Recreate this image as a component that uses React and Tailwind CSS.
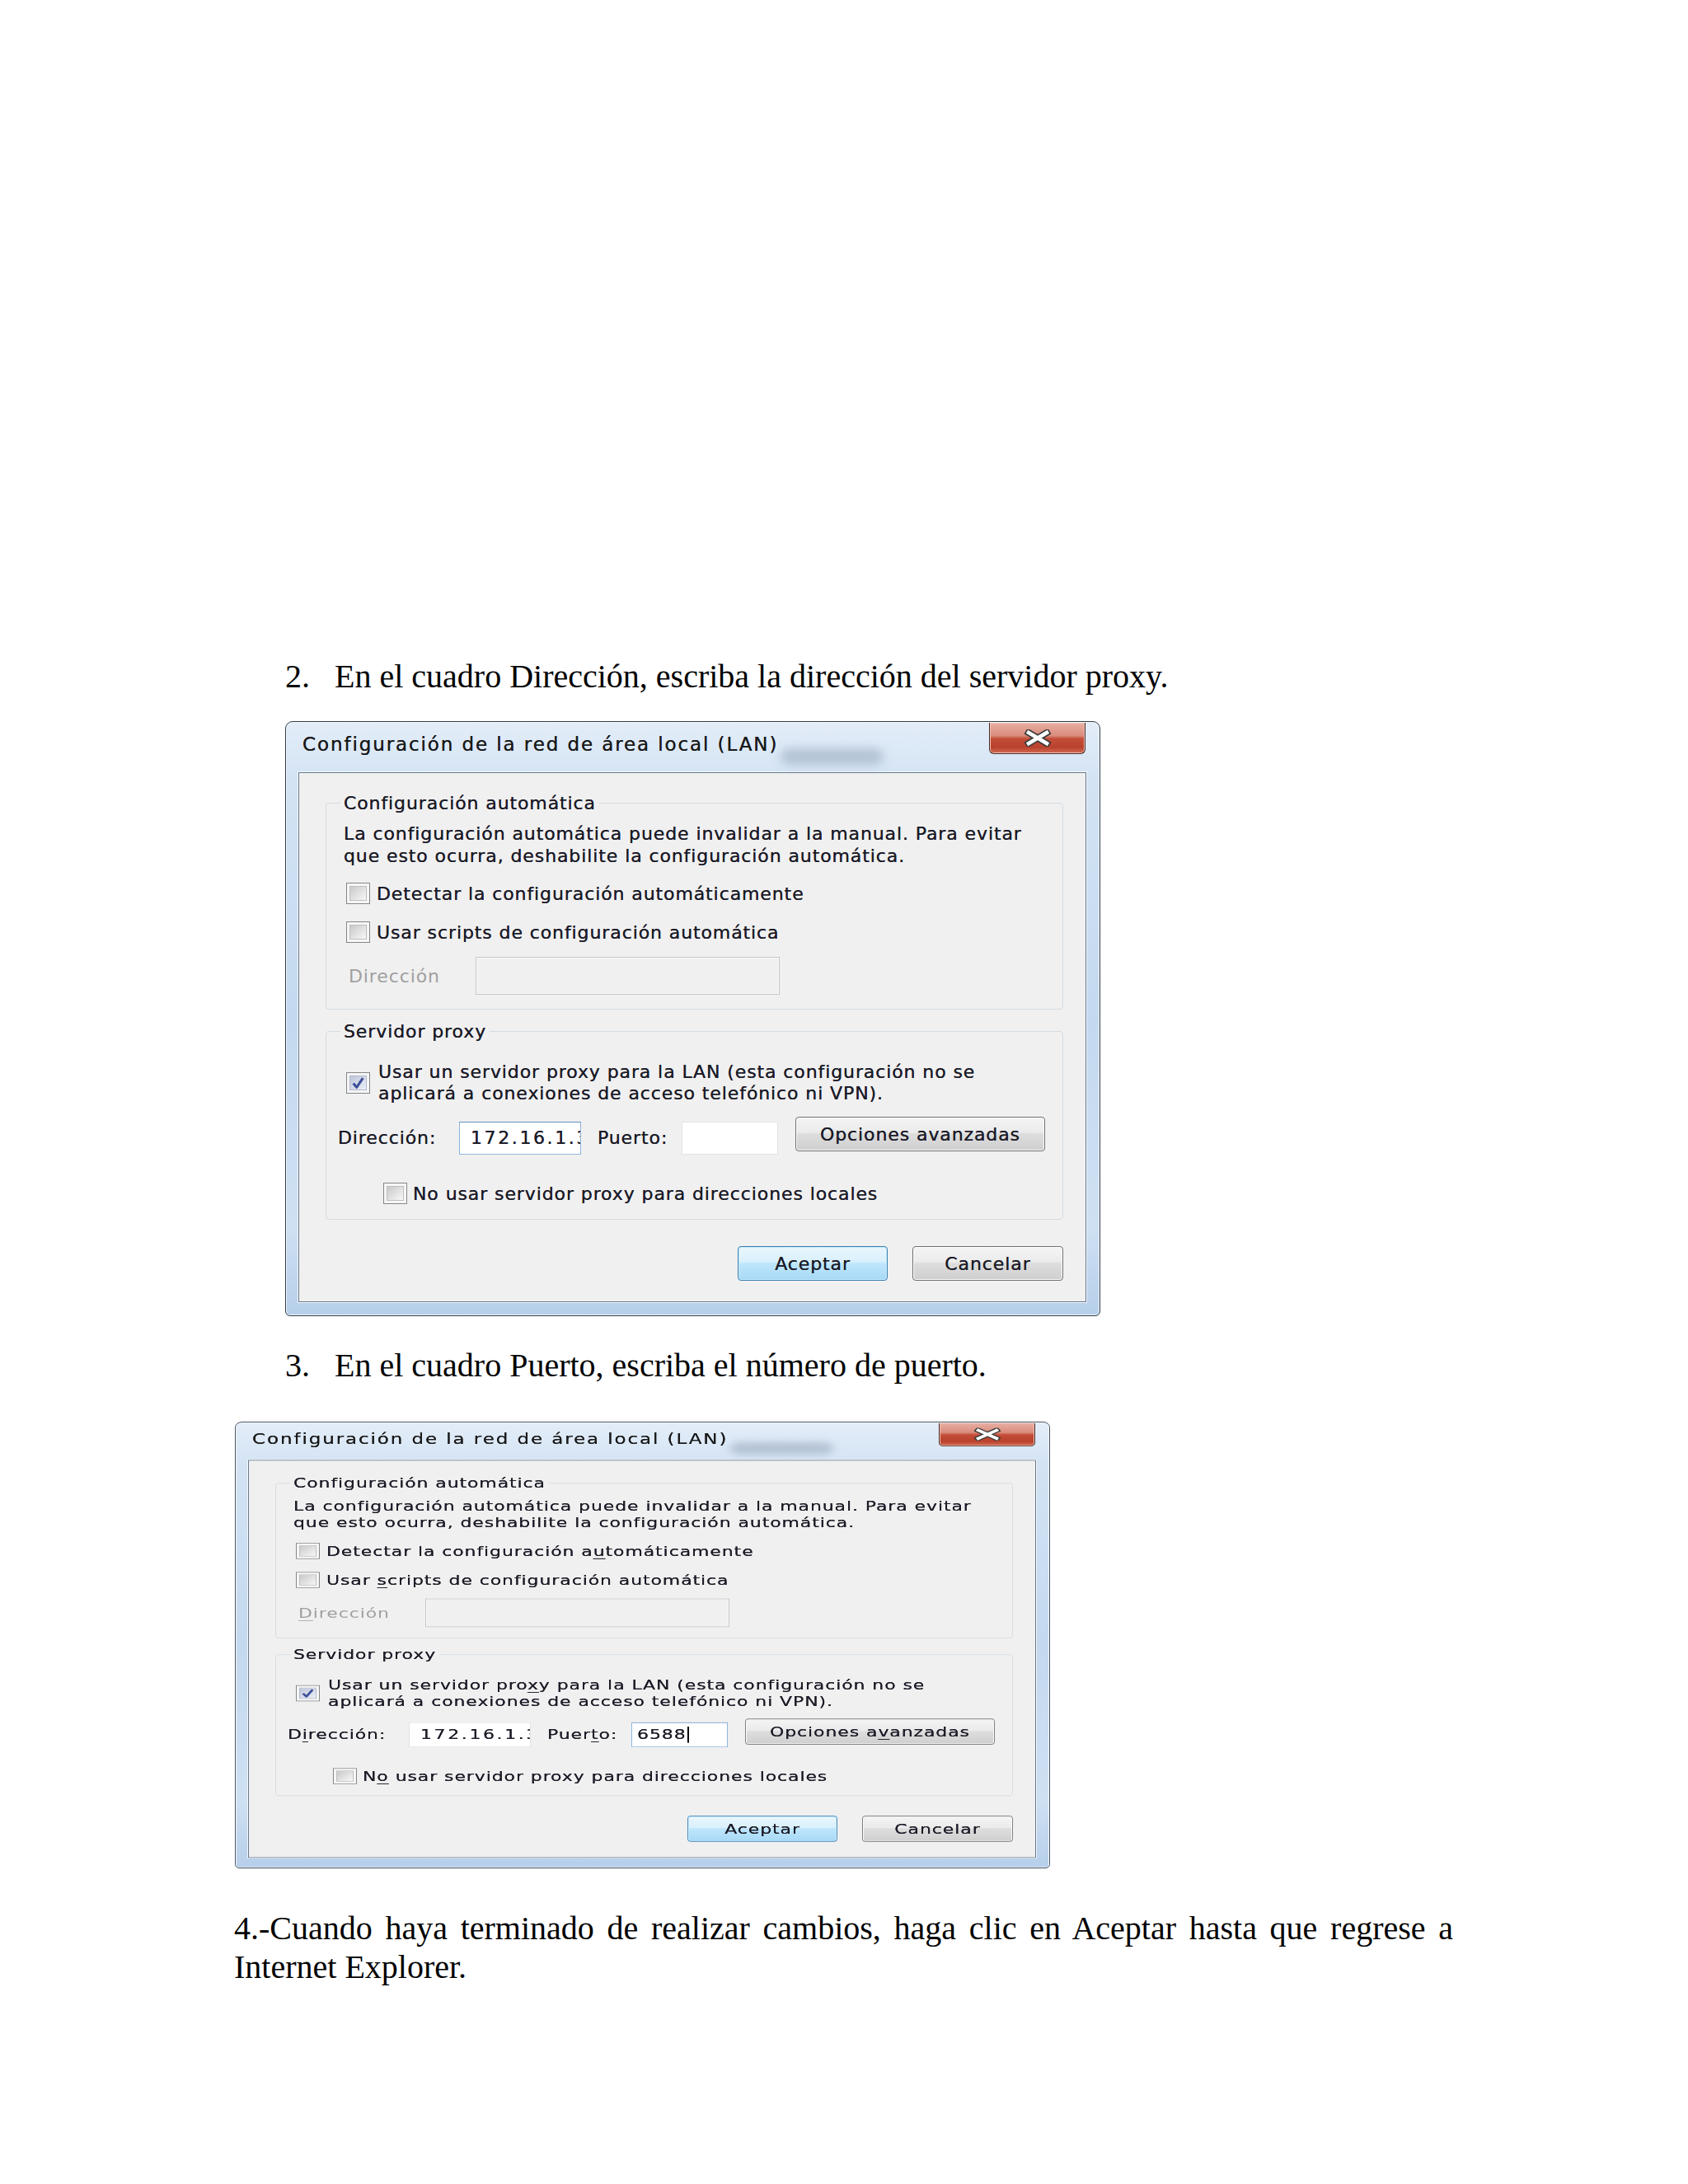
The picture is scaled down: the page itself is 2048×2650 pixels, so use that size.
import React from 'react'

const serif = "font-['Liberation_Serif','Times_New_Roman',serif]"
const ui = "font-['DejaVu_Sans','Noto_Sans',sans-serif]"

// access-key underline, only drawn in the second screenshot
function K({ on, children }) {
  if (!on) return children
  return <span className="underline decoration-1 underline-offset-[4px]">{children}</span>
}

function CheckBox({ checked = false }) {
  return (
    <div className="w-[29px] h-[26px] shrink-0 border border-[#858787] bg-[#f6f6f6] p-[3px]">
      <div
        className={
          checked
            ? 'relative h-full w-full border border-[#b3b9cc] bg-gradient-to-br from-[#bfc6db] to-[#eceff6]'
            : 'h-full w-full border border-[#bfbfbf] bg-gradient-to-br from-[#c9c9c9] to-[#f8f8f8]'
        }
      >
        {checked && (
          <svg viewBox="0 0 21 18" className="absolute inset-0 h-full w-full">
            <path d="M4 9.5 L8.5 15 L17 2.5" fill="none" stroke="#3d4f9a" strokeWidth="3.4" strokeLinejoin="round" />
          </svg>
        )}
      </div>
    </div>
  )
}

function Button({ children, primary = false, className = '' }) {
  return (
    <div
      className={
        'flex items-center justify-center rounded-[4px] border ' +
        (primary
          ? 'border-[#3c7fb1] bg-[linear-gradient(to_bottom,#eaf6fd_0%,#d9f0fc_45%,#bee6fd_50%,#a7d9f5_100%)] shadow-[inset_0_0_0_1px_#c6ecff] '
          : 'border-[#707070] bg-[linear-gradient(to_bottom,#f4f4f4_0%,#ebebeb_45%,#dddddd_50%,#cfcfcf_100%)] shadow-[inset_0_0_0_1px_#fcfcfc] ') +
        className
      }
    >
      {children}
    </div>
  )
}

function Dialog({ alt = false }) {
  return (
    <div className={`relative flex h-[722px] w-[989px] flex-col overflow-hidden rounded-t-[9px] rounded-b-[6px] border border-[#2f3b48] bg-[linear-gradient(to_bottom,#e3edf8_0%,#d3e3f4_10%,#c4d9ef_50%,#cfe0f2_85%,#b6cfea_100%)] shadow-[inset_0_0_0_1px_#f4f8fd] ${ui}`}>
      {/* glass smudge behind the title */}
      <div className="absolute left-[600px] top-[32px] h-[20px] w-[125px] rounded-full bg-[#7d8ea3] opacity-40 blur-[6px]" />

      {/* title bar */}
      <div className="relative flex h-[61px] shrink-0 items-start">
        <span className="ml-[20px] mt-[13px] text-[23px] leading-[28px] tracking-[1.9px] text-[#1a1a1a] [text-shadow:0_0_0.5px_#1a1a1a]">
          Configuración de la red de área local (LAN)
        </span>
        <div className="ml-auto mr-[17px] mt-[1px] flex h-[38px] w-[117px] items-center justify-center rounded-b-[6px] border border-t-0 border-[#4a2a26] bg-[linear-gradient(to_bottom,#e8b0a3_0%,#d98c7c_42%,#c44e39_52%,#b9412d_80%,#d36c52_100%)] shadow-[inset_0_0_0_1px_#f0c2b6]">
          <svg width="34" height="21" viewBox="0 0 34 21">
            <path d="M6 4 L28 17 M28 4 L6 17" stroke="#3b3b3b" strokeWidth="8" strokeLinecap="square" />
            <path d="M6 4 L28 17 M28 4 L6 17" stroke="#ffffff" strokeWidth="4.6" strokeLinecap="square" />
          </svg>
        </div>
      </div>

      {/* client area */}
      <div className="mx-[15px] mb-[16px] mr-[16px] flex-1 border border-[#66778a] bg-[#f0f0f0] pl-[32px] pr-[27px] pt-[23px] text-[22px] tracking-[0.9px] text-[#1c1c28] shadow-[0_0_0_1px_#f3f8fd] [text-shadow:0_0_0.5px_#1c1c28]">
        <fieldset className="rounded-[4px] border border-[#d3dbe2]">
          <legend className="ml-[17px] px-[4px] leading-[27px]">Configuración automática</legend>
          <div className="pb-[17px] pl-[21px] pt-[10px]">
            <div className="leading-[27px]">
              <div className="whitespace-nowrap">La configuración automática puede invalidar a la manual. Para evitar</div>
              <div className="whitespace-nowrap">que esto ocurra, deshabilite la configuración automática.</div>
            </div>
            <div className="ml-[3px] mt-[17px] flex h-[30px] items-center gap-[8px]">
              <CheckBox />
              <span>Detectar la configuración a<K on={alt}>u</K>tomáticamente</span>
            </div>
            <div className="ml-[3px] mt-[17px] flex h-[30px] items-center gap-[8px]">
              <CheckBox />
              <span>Usar <K on={alt}>s</K>cripts de configuración automática</span>
            </div>
            <div className="mt-[15px] flex h-[46px] items-center">
              <span className="ml-[6px] w-[154px] text-[#a0a0a0] [text-shadow:none]"><K on={alt}>D</K>irección</span>
              <div className="h-[46px] w-[369px] border border-[#c4c7cc] bg-[#f0f0f0] shadow-[inset_0_0_0_1px_#f8f8f8]" />
            </div>
          </div>
        </fieldset>

        <fieldset className="mt-[13px] rounded-[4px] border border-[#d3dbe2]">
          <legend className="ml-[17px] px-[4px] leading-[27px]">Servidor proxy</legend>
          <div className="pb-[16px] pl-[14px] pt-[23px]">
            <div className="ml-[10px] flex items-center gap-[10px]">
              <CheckBox checked />
              <div className="leading-[26px]">
                <div className="whitespace-nowrap">Usar un servidor pro<K on={alt}>x</K>y para la LAN (esta configuración no se</div>
                <div className="whitespace-nowrap">aplicará a conexiones de acceso telefónico ni VPN).</div>
              </div>
            </div>
            <div className="mt-[15px] flex h-[46px] items-start">
              <span className="mt-[6px] w-[147px] leading-[40px]">D<K on={alt}>i</K>rección:</span>
              <div
                className={
                  'mt-[6px] h-[40px] w-[148px] overflow-hidden whitespace-nowrap border bg-white pl-[13px] leading-[38px] tracking-[2.6px] ' +
                  (alt ? 'border-[#e2e3e6]' : 'border-[#8fb6de] border-t-[#5f8fc4]')
                }
              >
                172.16.1.3
              </div>
              <span className="ml-[20px] mt-[6px] w-[102px] leading-[40px]">Puer<K on={alt}>t</K>o:</span>
              <div
                className={
                  'mt-[6px] flex h-[40px] w-[117px] items-center border bg-white pl-[6px] leading-[38px] ' +
                  (alt ? 'border-[#8fb6de] border-t-[#5f8fc4]' : 'border-[#e2e3e6]')
                }
              >
                {alt && (
                  <>
                    <span>6588</span>
                    <span className="ml-[1px] h-[26px] w-[2px] bg-black" />
                  </>
                )}
              </div>
              <Button className="ml-[21px] h-[42px] w-[303px]">
                Opciones a<K on={alt}>v</K>anzadas
              </Button>
            </div>
            <div className="ml-[55px] mt-[32px] flex h-[30px] items-center gap-[7px]">
              <CheckBox />
              <span>N<K on={alt}>o</K> usar servidor proxy para direcciones locales</span>
            </div>
          </div>
        </fieldset>

        <div className="mt-[32px] flex justify-end gap-[30px]">
          <Button primary className="h-[42px] w-[182px]">Aceptar</Button>
          <Button className="h-[42px] w-[183px]">Cancelar</Button>
        </div>
      </div>
    </div>
  )
}

export default function App() {
  return (
    <div className={`min-h-[2650px] w-[2048px] bg-white pt-[798px] text-black ${serif}`}>
      <p className="ml-[346px] flex text-[40px] leading-[46px]">
        <span className="w-[60px]">2.</span>
        <span>En el cuadro Dirección, escriba la dirección del servidor proxy.</span>
      </p>

      <div className="ml-[346px] mt-[31px]">
        <Dialog />
      </div>

      <p className="ml-[346px] mt-[37px] flex text-[40px] leading-[46px]">
        <span className="w-[60px]">3.</span>
        <span>En el cuadro Puerto, escriba el número de puerto.</span>
      </p>

      {/* second screenshot is the same dialog, squeezed vertically */}
      <div className="ml-[285px] mt-[45px] h-[542px] w-[989px]">
        <div className="origin-top-left scale-y-[0.7507]">
          <Dialog alt />
        </div>
      </div>

      <p className="ml-[284px] mt-[49px] w-[1479px] text-justify text-[40px] leading-[47px]">
        4.-Cuando haya terminado de realizar cambios, haga clic en Aceptar hasta que regrese a Internet Explorer.
      </p>
    </div>
  )
}
